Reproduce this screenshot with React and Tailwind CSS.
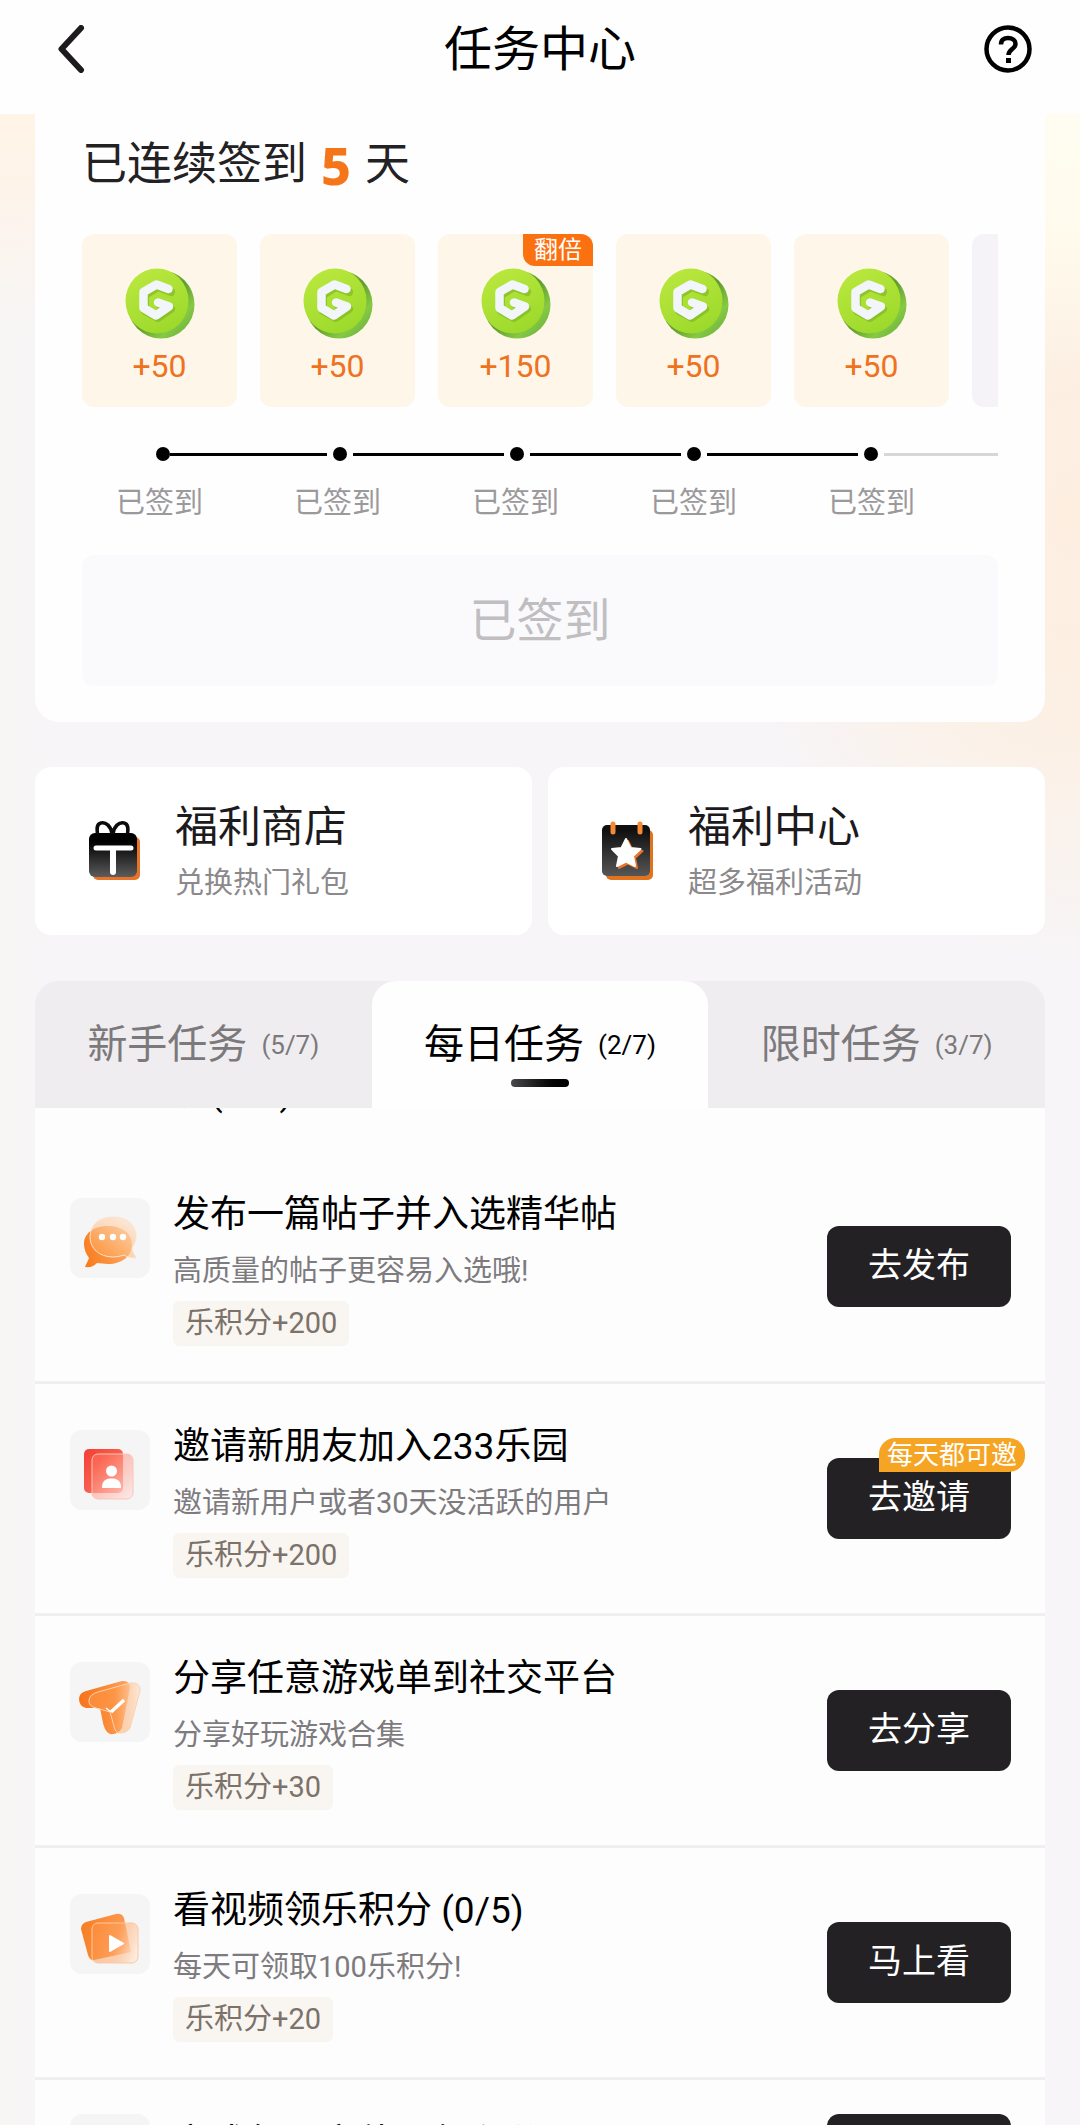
import React, { useState } from "react";

const days = [
  { points: "+50" },
  { points: "+50" },
  { points: "+150", badge: "翻倍" },
  { points: "+50" },
  { points: "+50" },
];

const tabs = [
  { name: "新手任务", count: "(5/7)" },
  { name: "每日任务", count: "(2/7)" },
  { name: "限时任务", count: "(3/7)" },
];

const tasks = [
  { title: "发布一篇帖子并入选精华帖", desc: "高质量的帖子更容易入选哦!", reward: "乐积分+200", action: "去发布", Icon: ChatIcon },
  { title: "邀请新朋友加入233乐园", desc: "邀请新用户或者30天没活跃的用户", reward: "乐积分+200", action: "去邀请", badge: "每天都可邀", Icon: InviteIcon },
  { title: "分享任意游戏单到社交平台", desc: "分享好玩游戏合集", reward: "乐积分+30", action: "去分享", Icon: ShareIcon },
  { title: "看视频领乐积分 (0/5)", desc: "每天可领取100乐积分!", reward: "乐积分+20", action: "马上看", Icon: VideoIcon },
];

function Coin() {
  return (
    <svg viewBox="0 0 70 71" className="h-[71px] w-[70px]" aria-hidden="true">
      <defs>
        <linearGradient id="coinSide" x1="0.1" y1="0.1" x2="0.9" y2="0.9">
          <stop offset="0" stopColor="#b4e04a" />
          <stop offset="0.5" stopColor="#5f9a2c" />
          <stop offset="0.8" stopColor="#86c944" />
          <stop offset="1" stopColor="#6fb53e" />
        </linearGradient>
        <linearGradient id="coinFace" x1="0.2" y1="0" x2="0.7" y2="1">
          <stop offset="0" stopColor="#bbe83e" />
          <stop offset="1" stopColor="#9bd92a" />
        </linearGradient>
      </defs>
      <ellipse cx="36" cy="36.500" rx="33.500" ry="34" fill="url(#coinSide)" />
      <ellipse cx="32" cy="33" rx="31.500" ry="32.500" fill="url(#coinFace)" />
      <path d="M46 24 33 19 20 27V43L33 50 46 41 35 37" fill="none" stroke="#7ab324" strokeWidth="8" strokeLinejoin="round" strokeLinecap="round" opacity="0.6" />
      <path d="M43.500 21 31.500 16.500 18.500 24V40L31 47.500 44 38.500 33 34.500" fill="none" stroke="#f2f5f9" strokeWidth="8.500" strokeLinejoin="round" strokeLinecap="round" />
    </svg>
  );
}

function GiftIcon() {
  return (
    <svg viewBox="0 0 52 60" className="h-[60px] w-[52px] shrink-0" aria-hidden="true">
      <defs>
        <linearGradient id="giftBox" x1="0" y1="0" x2="0" y2="1">
          <stop offset="0.2" stopColor="#000" />
          <stop offset="1" stopColor="#5c5c5c" />
        </linearGradient>
      </defs>
      <rect x="4" y="16" width="47" height="43" rx="5" fill="#e8742a" />
      <rect x="0" y="12" width="48" height="44" rx="6" fill="url(#giftBox)" />
      <path d="M23 13C22 5 17 1 12 2 7 3 8 9 8.500 13M24 13C25 5 30 1 35 2 40 3 39 9 38.500 13" fill="none" stroke="#0b0b0b" strokeWidth="3.500" />
      <path d="M7 27H42" stroke="#fff" strokeWidth="5" strokeLinecap="round" />
      <path d="M24 28V51" stroke="#fff" strokeWidth="6" strokeLinecap="round" />
    </svg>
  );
}

function CalendarIcon() {
  const star = "M24 18 28.500 27 38.500 28 31 35 33 45 24 40.500 15 45 17 35 10 28 19.500 27Z";
  return (
    <svg viewBox="0 0 52 60" className="h-[60px] w-[52px] shrink-0" aria-hidden="true">
      <defs>
        <linearGradient id="calBox" x1="0" y1="0" x2="0" y2="1">
          <stop offset="0.1" stopColor="#101010" />
          <stop offset="1" stopColor="#565656" />
        </linearGradient>
      </defs>
      <rect x="4" y="9" width="47" height="50" rx="5" fill="#e0731c" />
      <rect x="0" y="4" width="48" height="51" rx="5" fill="url(#calBox)" />
      <path d="M11 3V11M38 3V11" stroke="#f58a32" strokeWidth="5" strokeLinecap="round" />
      <path d={star} transform="translate(2 2)" fill="#e8742a" stroke="#e8742a" strokeWidth="2" strokeLinejoin="round" />
      <path d={star} fill="#fff" stroke="#fff" strokeWidth="2" strokeLinejoin="round" />
    </svg>
  );
}

function ChatIcon() {
  return (
    <svg viewBox="0 0 80 80" className="size-20" aria-hidden="true">
      <defs>
        <linearGradient id="chatBack" x1="0" y1="0.6" x2="1" y2="0.3">
          <stop offset="0" stopColor="#f87d1f" />
          <stop offset="1" stopColor="#fdb070" />
        </linearGradient>
        <linearGradient id="chatFront" x1="0.2" y1="1" x2="0.8" y2="0">
          <stop offset="0" stopColor="#ffa552" stopOpacity="0.5" />
          <stop offset="1" stopColor="#fde3cc" stopOpacity="0.7" />
        </linearGradient>
      </defs>
      <path d="M14 46C14 35 24 28 38 28 53 28 62 36 62 47 62 58 52 66 38 66 34 66 30 65 27 65 23 69 19 70 15 69 16 66 18 63 19 60 16 56 14 51 14 46Z" fill="url(#chatBack)" />
      <path d="M43 19C57 19 66 27 66 38 66 43 64 47 62 50 62 53 64 56 66 60 61 60 57 59 54 57 51 58 47 59 43 59 29 59 20 50 20 39 20 27 29 19 43 19Z" fill="url(#chatFront)" stroke="#fbe3d0" strokeWidth="1" />
      <circle cx="32" cy="39" r="3.200" fill="#fff" />
      <circle cx="43" cy="39" r="3.200" fill="#fff" />
      <circle cx="53" cy="39" r="3.200" fill="#fff" />
    </svg>
  );
}

function InviteIcon() {
  return (
    <svg viewBox="0 0 80 80" className="size-20" aria-hidden="true">
      <defs>
        <linearGradient id="invBack" x1="0" y1="0" x2="1" y2="1">
          <stop offset="0" stopColor="#f43f34" />
          <stop offset="1" stopColor="#fb7d68" />
        </linearGradient>
        <linearGradient id="invFront" x1="0.2" y1="0.1" x2="1" y2="1">
          <stop offset="0" stopColor="#ff7a62" stopOpacity="0.5" />
          <stop offset="1" stopColor="#fdeae8" stopOpacity="0.75" />
        </linearGradient>
      </defs>
      <rect x="14" y="19" width="39" height="44" rx="5" fill="url(#invBack)" />
      <rect x="22" y="24" width="41" height="45" rx="6" fill="url(#invFront)" stroke="#fbc4ba" strokeWidth="1" />
      <circle cx="41.500" cy="41" r="5.500" fill="#fff" />
      <path d="M32 58C32 51 35 48.500 41.500 48.500 48 48.500 51 51 51 58Z" fill="#fff" />
    </svg>
  );
}

function ShareIcon() {
  return (
    <svg viewBox="0 0 80 80" className="size-20" aria-hidden="true">
      <defs>
        <linearGradient id="shBack" x1="0" y1="0" x2="1" y2="0">
          <stop offset="0" stopColor="#f6741a" />
          <stop offset="0.6" stopColor="#fb8d3c" />
          <stop offset="1" stopColor="#fda868" />
        </linearGradient>
        <linearGradient id="shFront" x1="0" y1="0" x2="1" y2="0">
          <stop offset="0" stopColor="#ff9a4a" stopOpacity="0.5" />
          <stop offset="0.5" stopColor="#ff9a4a" stopOpacity="0.4" />
          <stop offset="1" stopColor="#fde8d8" stopOpacity="0.9" />
        </linearGradient>
      </defs>
      <path d="M16 29 52 19Q60 18 60 26L52 66Q48 73 40 72 34 70 32 56L30 46 16 46Q9 44 9 37 9 31 16 29Z" fill="url(#shBack)" />
      <path d="M28 30 60 21Q71 20 70 29L60 66Q57 71 50 71 45 71 44 64L40 50 26 46Q18 44 19 38 20 32 28 30Z" fill="url(#shFront)" stroke="#fbd2b0" strokeWidth="1" />
      <path d="M41 50 54 38" stroke="#fff" strokeWidth="3.500" />
      <path d="M36 46 41 50" stroke="#fff" strokeWidth="1.500" />
    </svg>
  );
}

function VideoIcon() {
  return (
    <svg viewBox="0 0 80 80" className="size-20" aria-hidden="true">
      <defs>
        <linearGradient id="vdBack" x1="0" y1="0.4" x2="1" y2="0.6">
          <stop offset="0" stopColor="#f77f25" />
          <stop offset="1" stopColor="#fda05a" />
        </linearGradient>
        <linearGradient id="vdFront" x1="0" y1="0.3" x2="1" y2="0.6">
          <stop offset="0" stopColor="#ff9448" stopOpacity="0.5" />
          <stop offset="0.5" stopColor="#ffa260" stopOpacity="0.5" />
          <stop offset="1" stopColor="#fdeadb" stopOpacity="0.9" />
        </linearGradient>
      </defs>
      <path d="M16 28 46 20Q52 19 54 24L61 58 24 66Q20 67 18 61L11 35Q11 30 16 28Z" fill="url(#vdBack)" />
      <rect x="22" y="29" width="46" height="40" rx="6" fill="url(#vdFront)" stroke="#fbc9a0" strokeWidth="1" />
      <path d="M40 42V57L53 49.500Z" fill="#fff" stroke="#fff" strokeWidth="2" strokeLinejoin="round" />
    </svg>
  );
}

function ShortcutCard({ title, desc, Icon }) {
  return (
    <a href="#" className="flex flex-1 items-center rounded-2xl bg-white py-[34px] pl-[54px]">
      <Icon />
      <span className="ml-[34px] flex flex-col gap-3">
        <span className="text-[43px] leading-[52px] text-[#1c1a1d]">{title}</span>
        <span className="text-[29px] leading-9 text-[#8b898c]">{desc}</span>
      </span>
    </a>
  );
}

function ActionButton({ label, badge }) {
  return (
    <div className="relative shrink-0">
      <button className="h-[81px] w-[184px] rounded-xl bg-[#232124] pb-1 text-[34px] leading-[48px] text-white">{label}</button>
      {badge && (
        <span className="absolute -top-5 -right-3.5 rounded-2xl rounded-bl-none bg-[#f5a523] px-2 text-[26px] leading-[34px] whitespace-nowrap text-white">
          {badge}
        </span>
      )}
    </div>
  );
}

function TaskRow({ title, desc, reward, action, badge, Icon }) {
  return (
    <li className="flex items-center border-b-[3px] border-[#f0eef1] bg-[#fefdfe] pt-[41px] pr-[34px] pb-[35px] pl-[35px]">
      <div className="mt-[5px] size-20 shrink-0 self-start rounded-xl bg-[#f6f5f6]">
        <Icon />
      </div>
      <div className="ml-[23px] flex-1">
        <h3 className="text-[37px] leading-[44px] text-black">{title}</h3>
        <p className="mt-4 text-[29px] leading-9 text-[#7d7b7e]">{desc}</p>
        <span className="mt-3 inline-block rounded-md bg-[#f9f5f1] px-3 align-top text-[29px] leading-[45px] text-[#7c7269]">{reward}</span>
      </div>
      <div className="-mt-[6px]">
        <ActionButton label={action} badge={badge} />
      </div>
    </li>
  );
}

export default function App() {
  const [active, setActive] = useState(1);
  return (
    <div className="flex h-screen flex-col overflow-hidden bg-[#f7f5f8] font-[Roboto,'Noto_Sans_CJK_SC',sans-serif]">
      <header className="flex h-[114px] shrink-0 items-start justify-between bg-[#fefefe] px-12 pt-[25px]">
        <button aria-label="返回" className="w-12 pl-2.5">
          <svg viewBox="0 0 28 48" className="h-12 w-7" fill="none" stroke="#1d1b1e" strokeWidth="6" strokeLinecap="round" strokeLinejoin="round" aria-hidden="true">
            <path d="M23 3 3.500 24 23 45" />
          </svg>
        </button>
        <h1 className="text-[48px] leading-[50px] text-black">任务中心</h1>
        <button aria-label="帮助">
          <svg viewBox="0 0 48 48" className="size-12" fill="none" stroke="#000" aria-hidden="true">
            <circle cx="24" cy="24" r="21.500" strokeWidth="4.500" />
            <path d="M17 19.500C17 15 20 13 24 13 28 13 31.500 15 31.500 19 31.500 24 24.500 24 24.500 30" strokeWidth="4.500" />
            <path d="M22 33H27V38H22Z" fill="#000" stroke="none" />
          </svg>
        </button>
      </header>

      <main className="min-h-0 flex-1 overflow-hidden bg-[radial-gradient(ellipse_320px_260px_at_100%_0px,#fffdf2_0%,#fffaec_50%,#fffaec00_100%),radial-gradient(ellipse_360px_460px_at_100%_400px,#fdeee0_0%,#fcf0e4_45%,#f7f5f800_100%),linear-gradient(to_bottom,#fff4e6_0,#fdf3ea_80px,#f7f6f500_220px),linear-gradient(to_right,#f7f6f4_0,#f7f5f8_60px)] px-[35px]">
        <section className="rounded-b-3xl bg-[#fefefe] px-[47px] pt-[21px] pb-9">
          <h2 className="flex h-[60px] items-center gap-3.5 text-[45px] leading-[60px] text-[#232124]">
            <span>已连续签到</span>
            <b className="font-['Noto_Sans'] text-[52px] leading-[60px] font-extrabold text-[#f5761a]">5</b>
            <span>天</span>
          </h2>

          <div className="mt-[39px] overflow-hidden">
            <ul className="flex gap-[23px]">
              {days.map((d, i) => (
                <li key={i} className="relative flex h-[173px] w-[155px] shrink-0 flex-col items-center rounded-xl bg-[#fdf6e9] pt-[34px]">
                  {d.badge && (
                    <span className="absolute top-0 right-0 rounded-tr-xl rounded-bl-xl bg-[#fb700f] px-[11px] text-[24px] leading-8 text-white">{d.badge}</span>
                  )}
                  <Coin />
                  <span className="mt-[9px] text-[32px] leading-9 text-[#ee7220]">{d.points}</span>
                </li>
              ))}
              <li className="h-[173px] w-[155px] shrink-0 rounded-xl bg-[#f5f3f8]" />
            </ul>

            <div className="mt-10 flex items-center pl-[74px]">
              {days.map((_, i) => (
                <React.Fragment key={i}>
                  <span className="size-3.5 shrink-0 rounded-full bg-black" />
                  {i < 4 ? (
                    <span className={`h-[3px] shrink-0 bg-black ${i === 0 ? "mr-1.5 w-[157px]" : "mx-1.5 w-[151px]"}`} />
                  ) : (
                    <span className="ml-1.5 h-[3px] flex-1 bg-[#d8d6d8]" />
                  )}
                </React.Fragment>
              ))}
            </div>

            <div className="mt-6 flex gap-[23px]">
              {days.map((_, i) => (
                <span key={i} className="w-[155px] shrink-0 text-center text-[29px] leading-9 text-[#9b999c]">已签到</span>
              ))}
            </div>
          </div>

          <button disabled className="mt-[34px] h-[131px] w-full rounded-xl bg-[#faf9fc] text-[47px] leading-[60px] text-[#c0bec1]">已签到</button>
        </section>

        <nav className="mt-[45px] flex gap-4">
          <ShortcutCard title="福利商店" desc="兑换热门礼包" Icon={GiftIcon} />
          <ShortcutCard title="福利中心" desc="超多福利活动" Icon={CalendarIcon} />
        </nav>

        <section className="mt-[46px]">
          <div role="tablist" className="grid grid-cols-3 rounded-t-3xl bg-[#efedef]">
            {tabs.map((t, i) => (
              <button
                key={t.name}
                role="tab"
                aria-selected={i === active}
                onClick={() => setActive(i)}
                className={`relative flex h-[127px] items-center justify-center gap-3.5 rounded-t-3xl ${i === active ? "bg-[#fefefe] text-black" : "text-[#7b797c]"}`}
              >
                <span className="text-[40px] leading-[52px]">{t.name}</span>
                <span className="text-[26px] leading-[52px]">{t.count}</span>
                {i === active && <span className="absolute bottom-[21px] left-1/2 h-2 w-[58px] -translate-x-1/2 rounded-full bg-linear-to-r from-[#4a484b] to-black" />}
              </button>
            ))}
          </div>
          <div className="h-11 overflow-hidden bg-[#fefdfe] pl-[138px]">
            <p className="-mt-[37px] text-[37px] leading-[44px] text-black">次(1/3)</p>
          </div>
          <ul>
            {tasks.map((t) => (
              <TaskRow key={t.title} {...t} />
            ))}
            <li className="flex items-start bg-[#fefdfe] py-[34px] pr-[34px] pl-[35px]">
              <div className="size-20 shrink-0 rounded-xl bg-[#f6f5f6]" />
              <h3 className="mt-2 ml-[23px] flex-1 text-[37px] leading-[44px] text-black">完成每日充值可领积分</h3>
              <ActionButton label="去完成" />
            </li>
          </ul>
        </section>
      </main>
    </div>
  );
}
